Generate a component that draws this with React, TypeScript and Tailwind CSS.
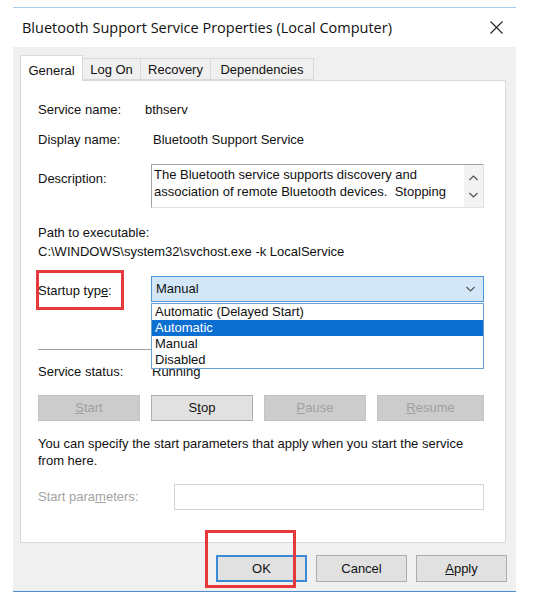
import React from 'react';

const sans = { fontFamily: '"Liberation Sans", Arial, sans-serif' };

const Chevron = ({ up = false }: { up?: boolean }) => (
  <svg width="9" height="6" viewBox="0 0 9 6" className="block">
    <path d={up ? 'M0.5 5L4.5 1L8.5 5' : 'M0.5 1L4.5 5L8.5 1'} fill="none" stroke="#555" strokeWidth="1.2" />
  </svg>
);

const Btn = ({ children, disabled = false, className = '' }: { children: React.ReactNode; disabled?: boolean; className?: string }) => (
  <div
    className={`h-[26px] flex items-center justify-center text-[13px] border ${
      disabled ? 'bg-[#cccccc] border-[#c2c2c2] text-[#a0a0a0]' : 'bg-[#e1e1e1] border-[#adadad] text-[#111]'
    } ${className}`}
  >
    {children}
  </div>
);

const App: React.FC = () => {
  return (
    <div className="w-[545px] h-[597px] bg-white pt-[7px] pl-[13px] overflow-hidden" style={sans}>
      <div className="w-[503px] h-[585px] flex flex-col bg-[#f0f0f0] border-t border-t-[#a9cbe9] border-b border-b-[#4a90d0]">
        {/* title bar */}
        <div className="h-[39px] shrink-0 bg-white flex items-center justify-between pl-[9px] pr-[13px]">
          <span className="text-[14.5px] text-[#111]" style={{ fontFamily: '"Open Sans", "Noto Sans", sans-serif' }}>
            Bluetooth Support Service Properties (Local Computer)
          </span>
          <svg width="13" height="13" viewBox="0 0 13 13">
            <path d="M0.5 0.5L12.5 12.5M12.5 0.5L0.5 12.5" stroke="#222" strokeWidth="1.1" />
          </svg>
        </div>

        <div className="px-[7px] pt-[8px]">
          {/* tabs */}
          <div className="flex items-end h-[25px] text-[13px] text-[#111]">
            <div className="relative z-10 h-[26px] -mb-[1px] w-[63px] bg-white border border-b-0 border-[#d9d9d9] flex items-start justify-center pt-[5px]">
              General
            </div>
            <div className="h-[22px] w-[58px] border border-l-0 border-[#d9d9d9] flex items-center justify-center pt-[2px]">Log On</div>
            <div className="h-[22px] w-[70px] border border-l-0 border-[#d9d9d9] flex items-center justify-center pt-[2px]">Recovery</div>
            <div className="h-[22px] w-[103px] border border-l-0 border-[#d9d9d9] flex items-center justify-center pt-[2px]">Dependencies</div>
          </div>

          {/* panel */}
          <div className="h-[463px] mr-[3px] bg-white border border-[#d9d9d9] pl-[17px] pr-[21px] text-[13px] text-[#111]">
            <div className="flex h-[16px] leading-[16px] mt-[21px]">
              <span className="w-[107px]">Service name:</span>
              <span>bthserv</span>
            </div>
            <div className="flex h-[16px] leading-[16px] mt-[14px]">
              <span className="w-[115px]">Display name:</span>
              <span>Bluetooth Support Service</span>
            </div>
            <div className="flex mt-[16px]">
              <span className="w-[113px] pt-[7px] leading-[16px]">Description:</span>
              <div className="flex-1 h-[44px] flex border-t border-l border-[#a3a3a3] border-r border-r-[#e3e3e3] border-b border-b-[#e3e3e3]">
                <div className="flex-1 pl-[2px] leading-[17px] pt-[1px]">
                  The Bluetooth service supports discovery and association of remote Bluetooth devices.&nbsp; Stopping
                </div>
                <div className="w-[19px] bg-[#f3f3f3] flex flex-col items-center justify-center gap-[11px]">
                  <Chevron up />
                  <Chevron />
                </div>
              </div>
            </div>
            <div className="mt-[15px] leading-[19px]">
              <div>Path to executable:</div>
              <div>C:\WINDOWS\system32\svchost.exe -k LocalService</div>
            </div>

            {/* startup type */}
            <div className="flex mt-[15px] relative">
              <span className="w-[113px] pt-[7px] leading-[16px]">
                Startup typ<span className="underline">e</span>:
              </span>
              <div className="flex-1 h-[26px] bg-[#d4e7f8] border border-[#4d96d8] flex items-center justify-between pl-[4px] pr-[8px]">
                <span>Manual</span>
                <Chevron />
              </div>
              <div className="absolute left-[113px] right-0 top-[27px] z-20 h-[66px] bg-white border border-[#6a9fd4] leading-[16px]">
                <div className="pl-[3px]">Automatic (Delayed Start)</div>
                <div className="pl-[3px] bg-[#0a6fd1] text-white">Automatic</div>
                <div className="pl-[3px]">Manual</div>
                <div className="pl-[3px]">Disabled</div>
              </div>
              <div className="absolute -left-[2px] -top-[6px] w-[88px] h-[40px] border-[3px] border-[#e5393c] z-30" />
            </div>

            <div className="mt-[47px] h-px bg-[#a0a0a0]" />

            <div className="flex h-[16px] leading-[16px] mt-[14px]">
              <span className="w-[114px]">Service status:</span>
              <span>Running</span>
            </div>

            <div className="flex gap-[11px] mt-[15px]">
              <Btn disabled className="w-[102px]"><span className="underline">S</span>tart</Btn>
              <Btn className="w-[102px]">S<span className="underline">t</span>op</Btn>
              <Btn disabled className="w-[102px]"><span className="underline">P</span>ause</Btn>
              <Btn disabled className="flex-1"><span className="underline">R</span>esume</Btn>
            </div>

            <div className="mt-[14px] leading-[17px]">
              You can specify the start parameters that apply when you start the service from here.
            </div>

            <div className="flex mt-[15px]">
              <span className="w-[136px] pt-[5px] leading-[16px] text-[#a3a3a3]">
                Start para<span className="underline">m</span>eters:
              </span>
              <div className="flex-1 h-[26px] bg-white border border-[#d4d4d4]" />
            </div>
          </div>

          {/* bottom buttons */}
          <div className="flex justify-end gap-[9px] mt-[12px] pr-[2px] text-[13px] text-[#111]">
            <div className="relative">
              <div className="w-[91px] h-[27px] bg-[#e1e1e1] border-2 border-[#3a8ad6] flex items-center justify-center">OK</div>
              <div className="absolute -left-[11px] -top-[25px] w-[91px] h-[58px] border-[3px] border-[#e5393c]" />
            </div>
            <div className="w-[91px] h-[27px] bg-[#e1e1e1] border border-[#adadad] flex items-center justify-center">Cancel</div>
            <div className="w-[91px] h-[27px] bg-[#e1e1e1] border border-[#adadad] flex items-center justify-center">
              <span className="underline">A</span>pply
            </div>
          </div>
        </div>
      </div>
    </div>
  );
};

export default App;
